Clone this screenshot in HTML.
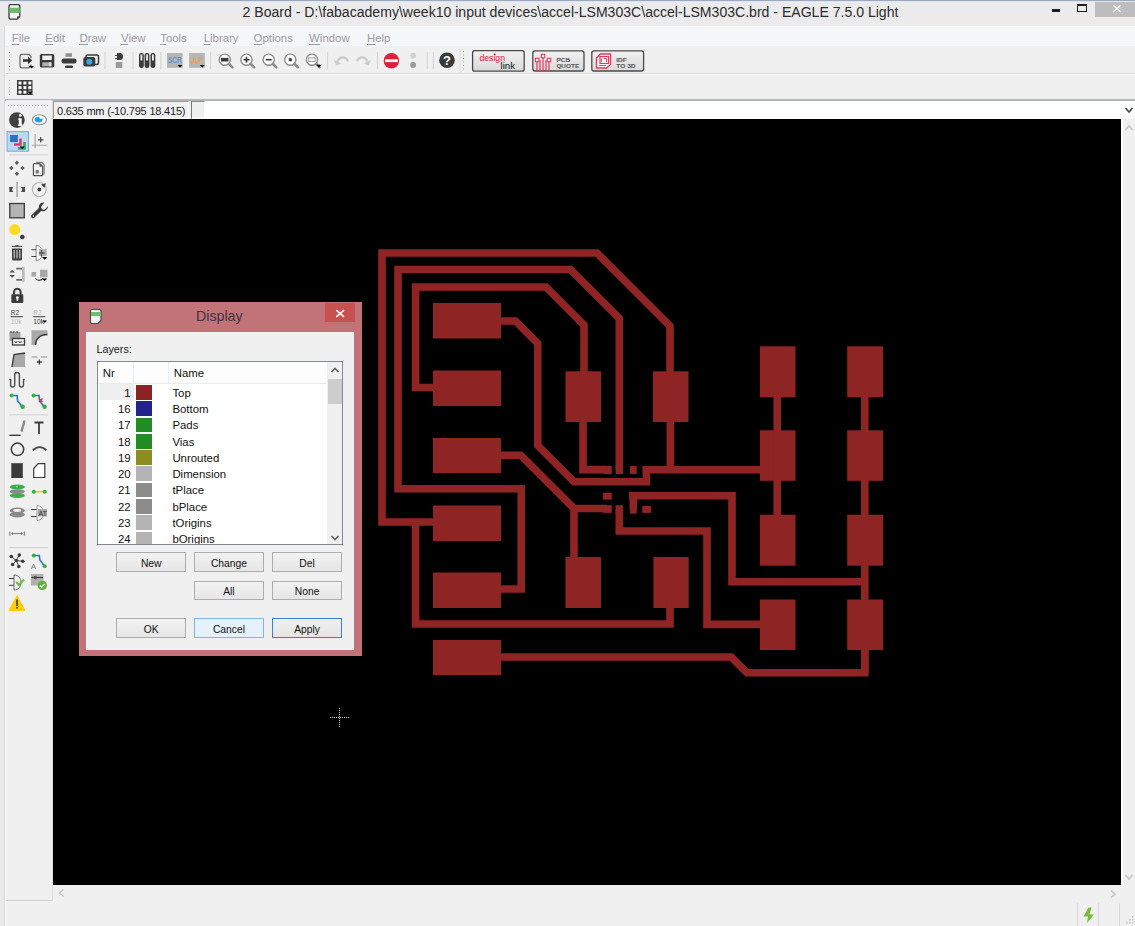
<!DOCTYPE html>
<html><head><meta charset="utf-8">
<style>
*{margin:0;padding:0;box-sizing:border-box}
html,body{width:1135px;height:926px;overflow:hidden;background:#f0f0f0;font-family:"Liberation Sans",sans-serif;position:relative}
.a{position:absolute}
#title{left:0;top:0;width:1135px;height:26px;background:#ebebeb;border-top:1px solid #9aa8c0;box-shadow:inset 0 1px 0 #dfe6ef}
#ttext{left:242.6px;top:4px;font-size:14.07px;color:#2b2b2b;white-space:nowrap}
#menubar{left:5px;top:26px;width:1130px;height:20.5px;background:#f5f6f8;border-top:1px solid #fdfdfd;border-bottom:1px solid #e6e7e9}
.mi{position:absolute;top:4.5px;font-size:11.4px;color:#9c9c9c;white-space:nowrap}
.mi u{text-decoration:none;border-bottom:1px solid #9a9a9a}
#tb1{left:6px;top:46px;width:1129px;height:28px;background:#f0f0f0;border-bottom:1px solid #d6d6d6}
#tb2{left:6px;top:74px;width:1129px;height:25px;background:#f0f0f0;border-top:1px solid #fafafa}
#cmdline{left:6px;top:99px;width:1129px;height:20px;background:#f0f0f0}
#canvas{left:53px;top:119px;width:1068px;height:766px;background:#000}
#lefttb{left:6px;top:100px;width:47px;height:801px;background:#f0f0f0;border-right:1px solid #dcdcdc;border-bottom:1.5px solid #d0d0d0}
#status{left:6px;top:901px;width:1129px;height:25px;background:#f0f0f0}
</style></head>
<body>

<div id="title" class="a"></div>
<svg class="a" style="left:8px;top:3px" width="14" height="18" viewBox="0 0 14 18"><path d="M2.6 1.6h7.6a1.6 1.6 0 0 1 1.6 1.6v10.2l-2.8 2.8h-6.4a1.6 1.6 0 0 1-1.6-1.6v-11.4a1.6 1.6 0 0 1 1.6-1.6z" fill="#fafafa" stroke="#3a3a3a" stroke-width="1.3"/><rect x="1.4" y="4.7" width="10.4" height="5.2" fill="#6cb86c"/><path d="M9 16.2v-2.8h2.8z" fill="#333"/></svg>
<div id="ttext" class="a">2 Board - D:\fabacademy\week10 input devices\accel-LSM303C\accel-LSM303C.brd - EAGLE 7.5.0 Light</div>
<div class="a" style="left:1052px;top:9px;width:8px;height:3px;background:#1e1e1e"></div>
<div class="a" style="left:1077px;top:4px;width:10px;height:8px;border:1px solid #1e1e1e;border-top-width:2px"></div>
<div class="a" style="left:1095px;top:2px;width:40px;height:15px;background:#bdbdbd"></div>
<svg class="a" style="left:1112px;top:4px" width="10" height="9" viewBox="0 0 10 9"><path d="M1 1L9 8M9 1L1 8" stroke="#fff" stroke-width="1.4"/></svg>
<div class="a" style="left:0;top:26px;width:4px;height:900px;background:#e9e9e9"></div>
<div class="a" style="left:4px;top:26px;width:1px;height:900px;background:#d9d9d9"></div>
<div class="a" style="left:5px;top:26px;width:1px;height:900px;background:#f7f7f7"></div>
<div id="menubar" class="a">
<span class="mi" style="left:6.8px"><u>F</u>ile</span>
<span class="mi" style="left:40.3px"><u>E</u>dit</span>
<span class="mi" style="left:74.4px"><u>D</u>raw</span>
<span class="mi" style="left:116px"><u>V</u>iew</span>
<span class="mi" style="left:155.2px"><u>T</u>ools</span>
<span class="mi" style="left:198.7px"><u>L</u>ibrary</span>
<span class="mi" style="left:248.6px"><u>O</u>ptions</span>
<span class="mi" style="left:304.1px"><u>W</u>indow</span>
<span class="mi" style="left:362px"><u>H</u>elp</span>
</div>

<div id="tb1" class="a"></div>
<div id="tb2" class="a"></div>
<!--TB-->
<svg class="a" style="left:0;top:46px" width="1135" height="54" viewBox="0 46 1135 54">
<rect x="9" y="52" width="1" height="1" fill="#a8a8a8"/><rect x="9" y="55.5" width="1" height="1" fill="#a8a8a8"/><rect x="9" y="59" width="1" height="1" fill="#a8a8a8"/><rect x="9" y="62.5" width="1" height="1" fill="#a8a8a8"/><rect x="9" y="66" width="1" height="1" fill="#a8a8a8"/><rect x="9" y="69.5" width="1" height="1" fill="#a8a8a8"/>
<rect x="9" y="80" width="1" height="1" fill="#a8a8a8"/><rect x="9" y="83.5" width="1" height="1" fill="#a8a8a8"/><rect x="9" y="87" width="1" height="1" fill="#a8a8a8"/><rect x="9" y="90.5" width="1" height="1" fill="#a8a8a8"/><rect x="9" y="94" width="1" height="1" fill="#a8a8a8"/>
<rect x="463" y="51" width="1" height="1" fill="#a8a8a8"/><rect x="463" y="54.5" width="1" height="1" fill="#a8a8a8"/><rect x="463" y="58" width="1" height="1" fill="#a8a8a8"/><rect x="463" y="61.5" width="1" height="1" fill="#a8a8a8"/><rect x="463" y="65" width="1" height="1" fill="#a8a8a8"/><rect x="463" y="68.5" width="1" height="1" fill="#a8a8a8"/>
<rect x="104.5" y="52" width="1" height="17" fill="#d2d2d2"/>
<rect x="132.5" y="52" width="1" height="17" fill="#d2d2d2"/>
<rect x="160.3" y="52" width="1" height="17" fill="#d2d2d2"/>
<rect x="210.1" y="52" width="1" height="17" fill="#d2d2d2"/>
<rect x="327.1" y="52" width="1" height="17" fill="#d2d2d2"/>
<rect x="376.9" y="52" width="1" height="17" fill="#d2d2d2"/>
<rect x="426.7" y="52" width="1" height="17" fill="#d2d2d2"/>
<rect x="432.8" y="52" width="1" height="17" fill="#d2d2d2"/>
<path d="M31 58.2V56.5L29 54.3H21.8Q20 54.3 20 56.1V66Q20 67.8 21.8 67.8H28.8L31 65.6V64.5" fill="none" stroke="#6e6e6e" stroke-width="1.3"/><path d="M23 59.2h5v-2.7l4.2 3.9l-4.2 3.9v-2.6h-5z" fill="#333"/><path d="M29 66h5l-2.5 2.5z" fill="#000"/>
<rect x="39.8" y="54" width="14.5" height="13.6" rx="1.8" fill="#3b3b3b"/><rect x="42.3" y="55.5" width="9.5" height="4.5" fill="#f0f0f0"/><rect x="42.3" y="62.3" width="9.5" height="4" fill="#b0b0b0"/><rect x="49" y="62.3" width="2" height="4" fill="#e0e0e0"/>
<rect x="65.5" y="53.3" width="6.5" height="3.5" fill="#8e8e8e"/><rect x="61.5" y="58.5" width="15" height="5" rx="2" fill="#3b3b3b"/><rect x="65" y="65.5" width="8" height="2.5" rx="1" fill="#3b3b3b"/>
<rect x="86" y="55" width="12.5" height="9.5" rx="2" fill="none" stroke="#3b3b3b" stroke-width="1.5"/><rect x="83.3" y="57" width="12" height="9.5" rx="2" fill="#3b3b3b"/><circle cx="89.3" cy="61.8" r="3" fill="#36a9e1"/>
<path d="M117 53h2.5a3.5 3.5 0 0 1 0 7h-2.5z" fill="#3b3b3b"/><rect x="115" y="55" width="2" height="1" fill="#3b3b3b"/><rect x="115" y="58" width="2" height="1" fill="#3b3b3b"/><rect x="115.8" y="62" width="6.5" height="6" fill="#9a9a9a"/>
<rect x="139" y="53" width="4.8" height="15" rx="2.2" fill="#3b3b3b"/><rect x="140.5" y="54.5" width="1.8" height="6" fill="#f4f4f4"/>
<rect x="144.6" y="53" width="4.8" height="15" rx="2.2" fill="#3b3b3b"/><rect x="146.1" y="54.5" width="1.8" height="6" fill="#f4f4f4"/>
<rect x="150.5" y="53" width="4.8" height="15" rx="2.2" fill="#3b3b3b"/><rect x="152" y="54.5" width="1.8" height="6" fill="#f4f4f4"/>
<rect x="167" y="53" width="15.6" height="14.8" fill="#b5b5b5"/><text x="168" y="63.2" font-family="Liberation Sans" font-size="9" fill="#3c8bd0" textLength="13.5" lengthAdjust="spacingAndGlyphs">SCR</text><path d="M177.5 65h5l-2.5 2.6z" fill="#000"/>
<rect x="189.2" y="53" width="15.6" height="14.8" fill="#b5b5b5"/><text x="190" y="63.2" font-family="Liberation Sans" font-size="9" fill="#f0a232" textLength="13" lengthAdjust="spacingAndGlyphs">ULP</text><path d="M199.8 65h5l-2.5 2.6z" fill="#000"/>
<circle cx="224.8" cy="59.7" r="5.6" fill="#fff" stroke="#8c8c8c" stroke-width="1.4"/><path d="M229.1 64l3.3 3.3" stroke="#8c8c8c" stroke-width="2.6" stroke-linecap="round"/>
<rect x="221" y="57.9" width="7.5" height="3.6" fill="#3b3b3b"/>
<circle cx="246.5" cy="59.7" r="5.6" fill="#fff" stroke="#8c8c8c" stroke-width="1.4"/><path d="M250.8 64l3.3 3.3" stroke="#8c8c8c" stroke-width="2.6" stroke-linecap="round"/>
<path d="M243.5 59.7h6M246.5 56.7v6" stroke="#3b3b3b" stroke-width="1.6"/>
<circle cx="268.7" cy="59.7" r="5.6" fill="#fff" stroke="#8c8c8c" stroke-width="1.4"/><path d="M273 64l3.3 3.3" stroke="#8c8c8c" stroke-width="2.6" stroke-linecap="round"/>
<path d="M265.7 59.7h6" stroke="#3b3b3b" stroke-width="1.6"/>
<circle cx="290.3" cy="59.7" r="5.6" fill="#fff" stroke="#8c8c8c" stroke-width="1.4"/><path d="M294.6 64l3.3 3.3" stroke="#8c8c8c" stroke-width="2.6" stroke-linecap="round"/>
<rect x="288.8" y="58.2" width="3" height="3" fill="#3b3b3b"/>
<circle cx="312" cy="59.7" r="5.6" fill="#fff" stroke="#8c8c8c" stroke-width="1.4"/><path d="M316.3 64l3.3 3.3" stroke="#8c8c8c" stroke-width="2.6" stroke-linecap="round"/>
<rect x="308.7" y="57.9" width="6.5" height="3.5" fill="none" stroke="#9a9a9a" stroke-width="1"/><path d="M316.5 64.8h5l-2.5 2.6z" fill="#000"/>
<path d="M348 61.3C345.5 56 340 56 337.3 61.5" fill="none" stroke="#cbcbcb" stroke-width="2.4"/><path d="M333.9 60.1L336.1 65.4L341.4 63.4z" fill="#cbcbcb"/>
<path d="M356.8 61.3C359.3 56 364.8 56 367.5 61.5" fill="none" stroke="#cbcbcb" stroke-width="2.4"/><path d="M370.9 60.1L368.7 65.4L363.4 63.4z" fill="#cbcbcb"/>
<circle cx="391.4" cy="60.7" r="7.7" fill="#e01e3c"/><rect x="385" y="59.3" width="12.8" height="2.8" fill="#fff"/>
<circle cx="413.1" cy="55.6" r="2.9" fill="#d0d0d0"/><circle cx="413.1" cy="64.9" r="2.9" fill="#9a9a9a"/>
<circle cx="447" cy="60.3" r="7.8" fill="#3a3a3a"/><text x="447" y="65.3" text-anchor="middle" font-family="Liberation Sans" font-weight="bold" font-size="13" fill="#fff">?</text>
<rect x="459.5" y="48" width="1" height="26" fill="#dedede"/>
<defs><linearGradient id="bg1" x1="0" y1="0" x2="0" y2="1"><stop offset="0" stop-color="#f2f2f2"/><stop offset="1" stop-color="#d9d9d9"/></linearGradient></defs>
<rect x="472.6" y="50.6" width="51.6" height="20.5" rx="2.2" fill="url(#bg1)" stroke="#4a4a4a" stroke-width="1.3"/>
<rect x="532.8" y="50.8" width="51.2" height="20.2" rx="2.2" fill="url(#bg1)" stroke="#4a4a4a" stroke-width="1.3"/>
<rect x="591.8" y="50.8" width="51.8" height="20.2" rx="2.2" fill="url(#bg1)" stroke="#4a4a4a" stroke-width="1.3"/>
<text x="479.5" y="61.3" font-family="Liberation Sans" font-size="9.5" fill="#e2143e" textLength="25.5" lengthAdjust="spacingAndGlyphs">design</text>
<circle cx="494.7" cy="54.5" r="1" fill="#e2143e"/>
<text x="500.5" y="69.3" font-family="Liberation Sans" font-size="8.5" fill="#111" textLength="14.5" lengthAdjust="spacingAndGlyphs">link</text>
<g stroke="#e8385a" stroke-width="1.2" fill="none"><path d="M537 62v9M540 60v11M543 57.5v13.5M546 60v11M549 62v9"/></g>
<g fill="#fff" stroke="#e8385a" stroke-width="1.1"><rect x="535.5" y="58.3" width="3.4" height="3.4"/><rect x="541.3" y="54.3" width="3.4" height="3.4"/><rect x="547.3" y="58.3" width="3.4" height="3.4"/></g>
<text x="556.4" y="61.8" font-family="Liberation Sans" font-weight="bold" font-size="6.2" fill="#555" textLength="13.8" lengthAdjust="spacingAndGlyphs">PCB</text>
<text x="556.4" y="68.1" font-family="Liberation Sans" font-weight="bold" font-size="6.2" fill="#555" textLength="22.8" lengthAdjust="spacingAndGlyphs">QUOTE</text>
<path d="M596.5 58l4-4h10v10.5l-4 3.5h-10z" fill="#fff" stroke="#e8385a" stroke-width="1.4" stroke-linejoin="round"/>
<rect x="600" y="56.5" width="8.5" height="7" fill="none" stroke="#e8385a" stroke-width="1.2"/>
<path d="M601.5 58.5v3.5M603.5 58.5h3v3.5M599 65.5h7" stroke="#e8385a" stroke-width="0.9" fill="none"/>
<text x="616.2" y="61.8" font-family="Liberation Sans" font-weight="bold" font-size="6.2" fill="#555" textLength="10.5" lengthAdjust="spacingAndGlyphs">IDF</text>
<text x="616.2" y="68.1" font-family="Liberation Sans" font-weight="bold" font-size="6.2" fill="#555" textLength="19.5" lengthAdjust="spacingAndGlyphs">TO 3D</text>
<rect x="17" y="80" width="15.5" height="15" fill="#3b3b3b"/>
<rect x="18.5" y="81.5" width="3" height="3" fill="#fafafa"/>
<rect x="18.5" y="86.1" width="3" height="3" fill="#fafafa"/>
<rect x="18.5" y="90.7" width="3" height="3" fill="#fafafa"/>
<rect x="23.4" y="81.5" width="3" height="3" fill="#fafafa"/>
<rect x="23.4" y="86.1" width="3" height="3" fill="#fafafa"/>
<rect x="23.4" y="90.7" width="3" height="3" fill="#fafafa"/>
<rect x="28.3" y="81.5" width="3" height="3" fill="#fafafa"/>
<rect x="28.3" y="86.1" width="3" height="3" fill="#fafafa"/>
<rect x="28.3" y="90.7" width="3" height="3" fill="#fafafa"/>
<path d="M27.5 91.5h5l-2.5 3z" fill="#000"/>
</svg>
<!--/TB-->
<div id="cmdline" class="a"></div>
<div class="a" style="left:5px;top:99px;width:1130px;height:1.5px;background:#b4b4bc"></div>
<div class="a" style="left:53px;top:101px;width:136px;height:17.5px;background:#f0f0f0;border-top:1px solid #9a9a9a;border-left:1px solid #9a9a9a;border-right:1px solid #fff;border-bottom:1px solid #fff"></div>
<div class="a" style="left:57px;top:105px;font-size:11px;letter-spacing:-0.2px;color:#1a1a1a;white-space:nowrap">0.635 mm (-10.795 18.415)</div>
<div class="a" style="left:190.5px;top:101px;width:14.5px;height:17.5px;background:#f0f0f0;border-top:1px solid #8a8a8a;border-left:1.5px solid #7a7a7a;border-right:1px solid #fff;border-bottom:1px solid #fff"></div>
<div class="a" style="left:205.4px;top:101px;width:930px;height:18px;background:#fff"></div>
<svg class="a" style="left:1124px;top:106px" width="10" height="9" viewBox="0 0 10 9"><path d="M1.5 2l3.5 4l3.5-4" fill="none" stroke="#4a4a4a" stroke-width="1.8"/></svg>
<div id="lefttb" class="a"></div>
<!--LTB-->
<svg class="a" style="left:0;top:100px" width="53" height="801" viewBox="0 100 53 801">
<rect x="8" y="105" width="1" height="1" fill="#a8a8a8"/>
<rect x="11" y="105" width="1" height="1" fill="#a8a8a8"/>
<rect x="14" y="105" width="1" height="1" fill="#a8a8a8"/>
<rect x="17" y="105" width="1" height="1" fill="#a8a8a8"/>
<rect x="20" y="105" width="1" height="1" fill="#a8a8a8"/>
<rect x="23" y="105" width="1" height="1" fill="#a8a8a8"/>
<rect x="26" y="105" width="1" height="1" fill="#a8a8a8"/>
<rect x="29" y="105" width="1" height="1" fill="#a8a8a8"/>
<rect x="32" y="105" width="1" height="1" fill="#a8a8a8"/>
<rect x="35" y="105" width="1" height="1" fill="#a8a8a8"/>
<rect x="38" y="105" width="1" height="1" fill="#a8a8a8"/>
<rect x="41" y="105" width="1" height="1" fill="#a8a8a8"/>
<rect x="44" y="105" width="1" height="1" fill="#a8a8a8"/>
<rect x="47" y="105" width="1" height="1" fill="#a8a8a8"/>
<circle cx="16.9" cy="120.1" r="7.8" fill="#404040"/><circle cx="20.3" cy="115.4" r="1.3" fill="#fff"/><path d="M18.3 118.3h3.4v6.2h0.8v1.6h-4.6v-1.6h0.9v-4.6h-0.5z" fill="#fff"/>
<ellipse cx="39.4" cy="119.8" rx="7" ry="5" fill="#fff" stroke="#8c8c8c" stroke-width="1.1"/><ellipse cx="38.6" cy="119.6" rx="4" ry="2.9" fill="#1ea0e6"/><circle cx="40.8" cy="117.6" r="1.4" fill="#fff"/>
<rect x="7" y="131.6" width="21.5" height="19.6" fill="#bcd9f4" stroke="#6fa9e6" stroke-width="1"/>
<rect x="10.1" y="135" width="7.8" height="7" fill="#2d72bf"/><path d="M20.5 138.4v6h-6.5" fill="none" stroke="#e3336a" stroke-width="2.5"/><path d="M24.5 142v6.4h-6.6" fill="none" stroke="#3aae5a" stroke-width="2.8"/><path d="M19.7 146.4h5l-2.5 2.8z" fill="#000"/>
<path d="M35.1 134v14.5M32 145.2h14.6" stroke="#a4a4a4" stroke-width="1.1"/><path d="M40.7 137v5.6M37.9 139.8h5.6" stroke="#505050" stroke-width="1.3"/><circle cx="40.7" cy="139.8" r="1" fill="#505050"/>
<rect x="9" y="154.4" width="39" height="1" fill="#d0d0d0"/>
<rect x="9" y="414.3" width="39" height="1" fill="#d0d0d0"/>
<rect x="9" y="547" width="39" height="1" fill="#d0d0d0"/>
<g fill="#5a5a5a"><path d="M16.9 160.6l2.1 2.2l-2.1 2.2l-2.1-2.2z M16.9 171.5l2.1 2.2l-2.1 2.2l-2.1-2.2z M11.3 165.9l2.2 2.2l-2.2 2.2l-2.2-2.2z M22.5 165.9l2.2 2.2l-2.2 2.2l-2.2-2.2z"/></g>
<path d="M36 162.2h5.8l2.3 2.4v10" fill="none" stroke="#6a6a6a" stroke-width="1.1"/><path d="M34.2 163.6h5.6l2.8 2.8v8.5a0.8 0.8 0 0 1-0.8 0.8h-7.6a0.8 0.8 0 0 1-0.8-0.8v-10.5a0.8 0.8 0 0 1 0.8-0.8z" fill="#f4f4f4" stroke="#555" stroke-width="1.2"/><path d="M39.5 163.6l3.1 3.1h-3.1z" fill="#555"/><rect x="35.6" y="170" width="3.2" height="3.5" fill="#7a7a7a"/>
<rect x="16.4" y="182" width="1.3" height="15" fill="#9a9a9a"/><path d="M9.3 187h4l-1.3 2.5l1.3 2.5h-4z M25 187h-4l1.3 2.5l-1.3 2.5h4z" fill="#4a4a4a"/>
<circle cx="39.3" cy="189.5" r="7" fill="none" stroke="#b4b4b4" stroke-width="1.2"/><circle cx="39.3" cy="189.5" r="1.9" fill="#3b3b3b"/><path d="M45.8 183.2l-4.6 1.3l3.3 3.3z" fill="#3b3b3b"/>
<rect x="9.8" y="203.5" width="14.5" height="14.3" fill="#b4b4b4" stroke="#3b3b3b" stroke-width="1.3"/>
<path d="M33.8 218.2a2 2 0 0 1-2.6-2.6l7.6-7.6a4.6 4.6 0 0 1 5.6-5.4l-2.6 2.8a2.4 2.4 0 0 0 3.8 3.3l2.4-2.6a4.6 4.6 0 0 1-6.6 4.6z" fill="#3b3b3b"/><circle cx="33.4" cy="216.1" r="0.8" fill="#f0f0f0"/>
<circle cx="14.7" cy="229.6" r="5.5" fill="#ffda22"/><circle cx="22.3" cy="237" r="2.3" fill="#3b3b3b"/>
<rect x="12" y="245.8" width="10" height="1.3" fill="#555"/><rect x="15.5" y="245" width="3" height="1" fill="#555"/><path d="M12 248.5h10v10.5a1.5 1.5 0 0 1-1.5 1.5h-7a1.5 1.5 0 0 1-1.5-1.5z" fill="#404040"/><rect x="13.6" y="250" width="1.2" height="8.3" fill="#c4c4c4"/><rect x="16.4" y="250" width="1.2" height="8.3" fill="#c4c4c4"/><rect x="19.2" y="250" width="1.2" height="8.3" fill="#c4c4c4"/>
<path d="M36.1 245.3c3.5 0.3 6.5 3.5 6.8 7.7c-0.3 4.2-3.3 7.4-6.8 7.7z" fill="#f8f8f8" stroke="#7a7a7a" stroke-width="0.9"/><rect x="39" y="249" width="7.8" height="7" fill="#b4b4b4"/><path d="M31.5 249.7h4.6M31.5 256.5h4.6" stroke="#444" stroke-width="1"/><path d="M41.5 250v6.5M38.8 253h6" stroke="#555" stroke-width="1.3"/><path d="M42 257h5.2l-2.6 2.8z" fill="#000"/>
<path d="M9.3 272.6l2.8-2.7l2.8 2.7z M9.3 275l2.8 2.7l2.8-2.7z" fill="#505050"/><path d="M16.2 268.7h6.3M16.2 279.8h6.3" stroke="#6a6a6a" stroke-width="1.8"/><rect x="22" y="266.7" width="2.7" height="15" fill="#bcbcbc"/>
<rect x="31.5" y="272" width="4.5" height="4.5" fill="#a8a8a8"/><rect x="40" y="269.7" width="7.5" height="7.5" fill="#a8a8a8"/><path d="M35.5 278.5c2 2.5 5 2.5 7.5 0" stroke="#3b3b3b" fill="none" stroke-width="1.1"/><path d="M42 278.5h5.2l-2.6 2.8z" fill="#000"/>
<path d="M14 294.5v-2.5a3.3 3.3 0 0 1 6.6 0v2.5" fill="none" stroke="#3b3b3b" stroke-width="2"/><rect x="11.3" y="294.3" width="12" height="8.7" rx="1.2" fill="#3b3b3b"/><rect x="16.6" y="297" width="1.6" height="4" fill="#fff"/><circle cx="17.4" cy="297.5" r="1.3" fill="#fff"/>
<text x="10.8" y="314.5" font-family="Liberation Sans" font-size="6.5" fill="#3b3b3b">R2</text><rect x="10.7" y="316.2" width="12" height="1" fill="#3b3b3b"/><text x="10.8" y="324" font-family="Liberation Sans" font-size="6.8" fill="#b8b8b8">10k</text>
<text x="33.3" y="314.5" font-family="Liberation Sans" font-size="6.5" fill="#b8b8b8">R2</text><rect x="33.3" y="316.2" width="12" height="1" fill="#3b3b3b"/><text x="33.3" y="324" font-family="Liberation Sans" font-size="6.8" fill="#3b3b3b">10k</text><path d="M42.5 320.5h4.5l-2.25 2.6z" fill="#000"/>
<rect x="9.5" y="332" width="11" height="9" fill="#a0a0a0"/><path d="M11 331v2M14 331v2M17 331v2" stroke="#3b3b3b" stroke-width="1"/><rect x="12.5" y="338.5" width="12" height="6.5" fill="#f0f0f0" stroke="#3b3b3b" stroke-width="1.3"/><path d="M15 341v1.5h2v-1.5M19 341v1.5h2v-1.5" stroke="#3b3b3b" stroke-width="0.8" fill="none"/>
<path d="M31.5 330.3h16v4c-7 0-11 4-11 10.8h-5z" fill="#a8a8a8"/><path d="M35.5 345c0-6 4.5-10.5 12-10.5" fill="none" stroke="#3b3b3b" stroke-width="1.5"/>
<path d="M14 354.5l11-1.5v14h-13z" fill="#a8a8a8"/><path d="M12 367l2-12.5l11-1.5" fill="none" stroke="#3b3b3b" stroke-width="1.4"/>
<path d="M31.5 357h6M41 357h6" stroke="#8a8a8a" stroke-width="1"/><path d="M39.3 359.5v5M36.8 362h5" stroke="#3b3b3b" stroke-width="1.4"/>
<path d="M9.3 379.5H10.6V385A2.05 2.05 0 0 0 14.7 385V374.8A2.35 2.35 0 0 1 19.4 374.8V385A2.05 2.05 0 0 0 23.5 385V379.5H24.7" fill="none" stroke="#4e4e4e" stroke-width="1.4"/>
<path d="M11.6 395.5h5.5l0.5 5.5l5 6" fill="none" stroke="#2a78c8" stroke-width="1.6"/><circle cx="11.6" cy="395.6" r="2" fill="#3aae48"/><circle cx="22.6" cy="406.8" r="2.3" fill="#3aae48"/>
<path d="M33.6 395.5h5.5l0.5 5.5l5 6" fill="none" stroke="#2a78c8" stroke-width="1.6"/><circle cx="33.6" cy="395.6" r="2" fill="#3aae48"/><circle cx="44.6" cy="406.8" r="2.3" fill="#3aae48"/><path d="M39 398.5l3.5 3.5M42.5 398.5l-3.5 3.5" stroke="#e0304a" stroke-width="1.3"/>
<rect x="9.5" y="434.6" width="11" height="1.4" fill="#3b3b3b"/><path d="M24.3 421.5L21.8 430.5" stroke="#8c8c8c" stroke-width="2.4" stroke-linecap="round"/><path d="M20.6 430l1.6 2.2l0.8-1.9z" fill="#8c8c8c"/>
<path d="M34.5 422.5h9M39 422.5v11.5" stroke="#3b3b3b" stroke-width="1.8"/>
<circle cx="17.5" cy="449.3" r="6.2" fill="none" stroke="#3b3b3b" stroke-width="1.5"/>
<path d="M32.8 450.3c4-4.3 9.6-4.3 13.6 0" fill="none" stroke="#484848" stroke-width="1.9"/>
<rect x="11.3" y="463.2" width="11.5" height="14.8" fill="#3b3b3b"/>
<path d="M33.7 468.5l4.5-4.8h6.6v13.8h-11.1z" fill="#fff" stroke="#3b3b3b" stroke-width="1.2"/>
<ellipse cx="17.3" cy="495.5" rx="7.5" ry="2.6" fill="#3aae48"/><ellipse cx="17.3" cy="491.5" rx="7.5" ry="2.3" fill="#8a8a8a"/><ellipse cx="17.3" cy="487" rx="7.5" ry="2.6" fill="#3aae48"/><circle cx="17" cy="486.5" r="0.8" fill="#c0e8c0"/>
<path d="M33.8 491.7h11" stroke="#f5c518" stroke-width="1.6"/><circle cx="33.8" cy="491.7" r="2" fill="#3aae48"/><circle cx="44.8" cy="491.7" r="2" fill="#3aae48"/>
<ellipse cx="17.3" cy="514.5" rx="7.5" ry="3" fill="#8a8a8a"/><ellipse cx="17.3" cy="510.5" rx="7.5" ry="3" fill="#8a8a8a"/><ellipse cx="17.3" cy="510.5" rx="4" ry="1.4" fill="#f5f5f5"/>
<path d="M37 505.5c4 0 6.5 3.5 6.5 7.5s-2.5 7.5-6.5 7.5z" fill="#fff" stroke="#8a8a8a" stroke-width="0.9"/><path d="M31.5 509.5h5M31.5 516.5h5" stroke="#3b3b3b" stroke-width="1.1"/><rect x="38" y="509" width="9" height="7.5" fill="#a8a8a8"/><text x="38.5" y="515.8" font-family="Liberation Sans" font-size="7" fill="#333">AT</text>
<path d="M9.8 531.5v4.3M24.3 531.5v4.3M12 533.6h10" stroke="#6a6a6a" stroke-width="0.9"/><path d="M11 533.6l2-1.3v2.6z M23 533.6l-2-1.3v2.6z" fill="#6a6a6a"/>
<g stroke="#3b3b3b" stroke-width="0.9"><path d="M16.3 560.5L11.3 556.5M16.3 560.5L19.3 555M16.3 560.5L22.8 561.3M16.3 560.5L12.6 564.5M16.3 560.5L18.8 566.5"/></g><g fill="#3b3b3b"><circle cx="16.3" cy="560.5" r="1.8"/><circle cx="11.3" cy="556.5" r="1.8"/><circle cx="19.3" cy="555" r="1.8"/><circle cx="22.8" cy="561.3" r="1.8"/><circle cx="12.6" cy="564.5" r="1.8"/><circle cx="18.8" cy="566.5" r="1.8"/></g>
<path d="M33.8 555.5h5.5l0.6 4.5l4.8 6.2" fill="none" stroke="#2a78c8" stroke-width="1.6"/><circle cx="33.8" cy="555.5" r="2" fill="#3aae48"/><circle cx="44.8" cy="566.2" r="2" fill="#3aae48"/><text x="30.8" y="568.5" font-family="Liberation Sans" font-size="8" fill="#777">A</text>
<path d="M14 575c4.5 0 7 3.5 7 7.5s-2.5 7.5-7 7.5" fill="none" stroke="#555" stroke-width="0.9"/><path d="M14 575v15" stroke="#555" stroke-width="0.9"/><path d="M9.3 578.5h4.5M9.3 585.3h4.5" stroke="#3b3b3b" stroke-width="1"/><path d="M16 582l3 3l5-5.5" fill="none" stroke="#6bbf3a" stroke-width="1.9"/>
<rect x="31" y="574" width="12.5" height="11.5" fill="#b0b0b0"/><path d="M31.5 577.5h11.5" stroke="#3b3b3b" stroke-width="1.2"/><circle cx="35.3" cy="577.5" r="1.3" fill="none" stroke="#3b3b3b" stroke-width="0.8"/><circle cx="42.3" cy="585.5" r="4.7" fill="#5fb53a"/><path d="M40 585.5l1.6 1.6l3-3" stroke="#fff" stroke-width="1.3" fill="none"/>
<path d="M17 595.5l8 15h-16z" fill="#ffcc00" stroke="#ffcc00" stroke-width="0.8" stroke-linejoin="round"/><rect x="16.3" y="599.5" width="1.5" height="6.5" fill="#333"/><rect x="16.3" y="607" width="1.5" height="1.5" fill="#333"/>
</svg>
<!--/LTB-->
<div id="canvas" class="a"></div>
<!--PCB-->
<svg class="a" style="left:0;top:0" width="1135" height="926" viewBox="0 0 1135 926">
<defs><clipPath id="cv"><rect x="53" y="119" width="1068" height="766"/></clipPath></defs>
<g clip-path="url(#cv)" fill="#8f2424">
<rect x="433" y="303" width="68" height="35.5"/>
<rect x="433" y="370.5" width="68" height="35.5"/>
<rect x="433" y="438" width="68" height="35"/>
<rect x="433" y="505.5" width="68" height="35.5"/>
<rect x="433" y="572.5" width="68" height="35.5"/>
<rect x="433" y="640" width="68" height="35"/>
<rect x="565.5" y="371.3" width="35.5" height="50.7"/>
<rect x="653" y="371.3" width="35.5" height="50.7"/>
<rect x="565.5" y="557" width="35.5" height="51"/>
<rect x="653.4" y="557" width="35.3" height="51"/>
<rect x="760" y="346.3" width="35.5" height="50.9"/>
<rect x="847.2" y="346.3" width="35.8" height="50.9"/>
<rect x="760" y="430.3" width="35.5" height="50.5"/>
<rect x="847.2" y="430.3" width="35.8" height="50.5"/>
<rect x="760" y="514.7" width="35.5" height="51"/>
<rect x="847.2" y="514.7" width="35.8" height="51"/>
<rect x="760" y="599.5" width="35.5" height="50.5"/>
<rect x="847.2" y="599.5" width="35.8" height="50.5"/>
<rect x="603" y="466" width="8.8" height="8"/>
<rect x="615.6" y="466" width="7.4" height="8"/>
<rect x="630" y="466" width="6.7" height="8"/>
<rect x="642.7" y="466" width="7.6" height="7.6"/>
<rect x="603" y="492.9" width="8.8" height="6.7"/>
<rect x="629" y="492" width="7.7" height="7.6"/>
<rect x="603" y="505.2" width="8.8" height="7.7"/>
<rect x="615.6" y="505.2" width="7.4" height="7.8"/>
<rect x="630" y="506" width="6.7" height="7.6"/>
<rect x="642.3" y="506" width="8.7" height="6.9"/>
</g><g clip-path="url(#cv)" fill="none" stroke="#8f2424" stroke-width="7.6" stroke-linejoin="miter" stroke-linecap="butt">
<polyline points="670,380 670,326 597,253 382,253 382,522 440,522"/>
<polyline points="415.6,522 415.6,624 670,624 670,600"/>
<polyline points="619.3,470 619.3,318.3 570.5,269.5 398,269.5 398,488.7 521.2,488.7 521.2,589 495,589"/>
<polyline points="440,387.5 415.6,387.5 415.6,287 546,287 584,325 584,380"/>
<polyline points="495,321 515.5,321 537.7,343.2 537.7,445.4 574,481.8 646.4,481.8 646.4,469.8 777,469.8"/>
<polyline points="583,415 583,469.6 607.4,469.6"/>
<polyline points="670.4,415 670.4,469.8"/>
<polyline points="495,455.3 520.8,455.3 574,508.5 607.4,508.5"/>
<polyline points="574,508.5 574,565"/>
<polyline points="633.3,509.5 633.3,495.7 732,495.7 732,581.7 864.6,581.7"/>
<polyline points="619.3,509 619.3,531 707,531 707,624.4 770,624.4"/>
<polyline points="495,657 731.3,657 747,672.8 864.8,672.8 864.8,640"/>
<polyline points="777.2,390 777.2,520"/>
<polyline points="864.8,390 864.8,672.8"/>
</g>
<g stroke="#c8c8c8" stroke-width="1" stroke-dasharray="1,1"><line x1="330" y1="717.5" x2="350" y2="717.5"/><line x1="339.5" y1="708" x2="339.5" y2="727"/></g>
</svg>
<!--/PCB-->
<!--DLG-->
<div class="a" style="left:78.6px;top:302.3px;width:283px;height:354.1px;background:#c27377"></div>
<svg class="a" style="left:89px;top:308px" width="14" height="17" viewBox="0 0 14 17"><path d="M3 1.5h7.5a1.5 1.5 0 0 1 1.5 1.5v9.5l-3 3h-6a1.5 1.5 0 0 1-1.5-1.5v-11a1.5 1.5 0 0 1 1.5-1.5z" fill="#f4f4f4" stroke="#4a4a4a" stroke-width="1.2"/><rect x="2" y="4" width="9.8" height="4" fill="#6fbf6f"/></svg>
<div class="a" style="left:196px;top:308.3px;font-size:14.2px;color:#3d3447;white-space:nowrap">Display</div>
<div class="a" style="left:325px;top:303.2px;width:29.7px;height:19.1px;background:#c75050"></div>
<svg class="a" style="left:335px;top:309px" width="10" height="9" viewBox="0 0 10 9"><path d="M1.3 1.1L9 7.9M9 1.1L1.3 7.9" stroke="#fff" stroke-width="1.5"/></svg>
<div class="a" style="left:86px;top:332px;width:268.2px;height:317.7px;background:#f0f0f0"></div>
<div class="a" style="left:96.4px;top:342.5px;font-size:10.8px;color:#1a1a1a;white-space:nowrap">Layers:</div>
<div class="a" style="left:97.2px;top:361.2px;width:245.5px;height:184.3px;background:#fff;border:1px solid #828790;overflow:hidden">
<div class="a" style="left:0;top:0;width:229px;height:21.5px;background:#fdfdfd;border-bottom:1px solid #e3ecf6"></div>
<div class="a" style="left:34.5px;top:0;width:1px;height:21.5px;background:#e8eef6"></div>
<div class="a" style="left:70.3px;top:0;width:1px;height:21.5px;background:#e8eef6"></div>
<div class="a" style="left:4.5px;top:5px;font-size:11.4px;color:#111;white-space:nowrap">Nr</div>
<div class="a" style="left:75.5px;top:5px;font-size:11.4px;color:#111;white-space:nowrap">Name</div>
<div class="a" style="left:0.5px;top:22.2px;width:35px;height:16px;background:#efefef"></div>
<div class="a" style="left:0;top:24.50px;width:32.5px;text-align:right;font-size:11.4px;color:#111;white-space:nowrap">1</div>
<div class="a" style="left:38.2px;top:22.80px;width:15.4px;height:14.8px;background:#8c2323"></div>
<div class="a" style="left:74.2px;top:24.50px;font-size:11.4px;color:#111;white-space:nowrap">Top</div>
<div class="a" style="left:0;top:40.78px;width:32.5px;text-align:right;font-size:11.4px;color:#111;white-space:nowrap">16</div>
<div class="a" style="left:38.2px;top:39.08px;width:15.4px;height:14.8px;background:#23238c"></div>
<div class="a" style="left:74.2px;top:40.78px;font-size:11.4px;color:#111;white-space:nowrap">Bottom</div>
<div class="a" style="left:0;top:57.06px;width:32.5px;text-align:right;font-size:11.4px;color:#111;white-space:nowrap">17</div>
<div class="a" style="left:38.2px;top:55.36px;width:15.4px;height:14.8px;background:#238c23"></div>
<div class="a" style="left:74.2px;top:57.06px;font-size:11.4px;color:#111;white-space:nowrap">Pads</div>
<div class="a" style="left:0;top:73.34px;width:32.5px;text-align:right;font-size:11.4px;color:#111;white-space:nowrap">18</div>
<div class="a" style="left:38.2px;top:71.64px;width:15.4px;height:14.8px;background:#238c23"></div>
<div class="a" style="left:74.2px;top:73.34px;font-size:11.4px;color:#111;white-space:nowrap">Vias</div>
<div class="a" style="left:0;top:89.62px;width:32.5px;text-align:right;font-size:11.4px;color:#111;white-space:nowrap">19</div>
<div class="a" style="left:38.2px;top:87.92px;width:15.4px;height:14.8px;background:#8c8c23"></div>
<div class="a" style="left:74.2px;top:89.62px;font-size:11.4px;color:#111;white-space:nowrap">Unrouted</div>
<div class="a" style="left:0;top:105.90px;width:32.5px;text-align:right;font-size:11.4px;color:#111;white-space:nowrap">20</div>
<div class="a" style="left:38.2px;top:104.20px;width:15.4px;height:14.8px;background:#b4b4b4"></div>
<div class="a" style="left:74.2px;top:105.90px;font-size:11.4px;color:#111;white-space:nowrap">Dimension</div>
<div class="a" style="left:0;top:122.18px;width:32.5px;text-align:right;font-size:11.4px;color:#111;white-space:nowrap">21</div>
<div class="a" style="left:38.2px;top:120.48px;width:15.4px;height:14.8px;background:#8c8c8c"></div>
<div class="a" style="left:74.2px;top:122.18px;font-size:11.4px;color:#111;white-space:nowrap">tPlace</div>
<div class="a" style="left:0;top:138.46px;width:32.5px;text-align:right;font-size:11.4px;color:#111;white-space:nowrap">22</div>
<div class="a" style="left:38.2px;top:136.76px;width:15.4px;height:14.8px;background:#8c8c8c"></div>
<div class="a" style="left:74.2px;top:138.46px;font-size:11.4px;color:#111;white-space:nowrap">bPlace</div>
<div class="a" style="left:0;top:154.74px;width:32.5px;text-align:right;font-size:11.4px;color:#111;white-space:nowrap">23</div>
<div class="a" style="left:38.2px;top:153.04px;width:15.4px;height:14.8px;background:#b4b4b4"></div>
<div class="a" style="left:74.2px;top:154.74px;font-size:11.4px;color:#111;white-space:nowrap">tOrigins</div>
<div class="a" style="left:0;top:171.02px;width:32.5px;text-align:right;font-size:11.4px;color:#111;white-space:nowrap">24</div>
<div class="a" style="left:38.2px;top:169.32px;width:15.4px;height:14.8px;background:#b4b4b4"></div>
<div class="a" style="left:74.2px;top:171.02px;font-size:11.4px;color:#111;white-space:nowrap">bOrigins</div>
<div class="a" style="left:229.3px;top:0;width:15.5px;height:183px;background:#f0f0f0"></div>
<div class="a" style="left:230.3px;top:17px;width:13.5px;height:25px;background:#cdcdcd"></div>
<svg class="a" style="left:232px;top:4px" width="10" height="8" viewBox="0 0 10 8"><path d="M1.5 6l3.5-3.5l3.5 3.5" fill="none" stroke="#606060" stroke-width="1.6"/></svg>
<svg class="a" style="left:232px;top:172px" width="10" height="8" viewBox="0 0 10 8"><path d="M1.5 2l3.5 3.5l3.5-3.5" fill="none" stroke="#606060" stroke-width="1.6"/></svg>
</div>
<div class="a" style="left:116.3px;top:552.4px;width:69.8px;height:19.7px;background:linear-gradient(#f2f2f2,#e6e6e6);border:1px solid #adadad;font-size:10.3px;color:#111;text-align:center;padding-top:1.5px;line-height:17.7px;white-space:nowrap">New</div>
<div class="a" style="left:194.2px;top:552.4px;width:69.5px;height:19.7px;background:linear-gradient(#f2f2f2,#e6e6e6);border:1px solid #adadad;font-size:10.3px;color:#111;text-align:center;padding-top:1.5px;line-height:17.7px;white-space:nowrap">Change</div>
<div class="a" style="left:272.2px;top:552.4px;width:69.8px;height:19.7px;background:linear-gradient(#f2f2f2,#e6e6e6);border:1px solid #adadad;font-size:10.3px;color:#111;text-align:center;padding-top:1.5px;line-height:17.7px;white-space:nowrap">Del</div>
<div class="a" style="left:194.2px;top:580.5px;width:69.5px;height:19.5px;background:linear-gradient(#f2f2f2,#e6e6e6);border:1px solid #adadad;font-size:10.3px;color:#111;text-align:center;padding-top:1.5px;line-height:17.5px;white-space:nowrap">All</div>
<div class="a" style="left:272.2px;top:580.5px;width:69.8px;height:19.5px;background:linear-gradient(#f2f2f2,#e6e6e6);border:1px solid #adadad;font-size:10.3px;color:#111;text-align:center;padding-top:1.5px;line-height:17.5px;white-space:nowrap">None</div>
<div class="a" style="left:116.3px;top:618px;width:69.8px;height:19.6px;background:linear-gradient(#f2f2f2,#e6e6e6);border:1px solid #adadad;font-size:10.3px;color:#111;text-align:center;padding-top:1.5px;line-height:17.6px;white-space:nowrap">OK</div>
<div class="a" style="left:194.2px;top:618px;width:69.5px;height:19.6px;background:#e5f1fb;border:1px solid #7eb4ea;font-size:10.3px;color:#111;text-align:center;padding-top:1.5px;line-height:17.6px;white-space:nowrap">Cancel</div>
<div class="a" style="left:272.2px;top:618px;width:69.8px;height:19.6px;background:linear-gradient(#f0f0f0,#e5e5e5);border:1px solid #3c7fd1;font-size:10.3px;color:#111;text-align:center;padding-top:1.5px;line-height:17.6px;white-space:nowrap">Apply</div>
<!--/DLG-->
<div id="status" class="a"></div>
<div class="a" style="left:1121px;top:119px;width:1.5px;height:766px;background:#fff"></div>
<svg class="a" style="left:1124px;top:123px" width="10" height="9" viewBox="0 0 10 9"><path d="M1.5 7l3.5-4l3.5 4" fill="none" stroke="#c4c4c4" stroke-width="1.6"/></svg>
<svg class="a" style="left:1124px;top:873px" width="10" height="9" viewBox="0 0 10 9"><path d="M1.5 2l3.5 4l3.5-4" fill="none" stroke="#c4c4c4" stroke-width="1.6"/></svg>
<svg class="a" style="left:57px;top:888px" width="9" height="10" viewBox="0 0 9 10"><path d="M6.5 1.5l-4 3.5l4 3.5" fill="none" stroke="#c4c4c4" stroke-width="1.6"/></svg>
<svg class="a" style="left:1109px;top:889px" width="9" height="10" viewBox="0 0 9 10"><path d="M2 1.5l4 3.5l-4 3.5" fill="none" stroke="#c4c4c4" stroke-width="1.6"/></svg>
<div class="a" style="left:1076.5px;top:903px;width:1px;height:23px;background:#dadada"></div>
<div class="a" style="left:1097.5px;top:903px;width:1px;height:23px;background:#dadada"></div>
<div class="a" style="left:1119px;top:903px;width:1px;height:23px;background:#dadada"></div>
<svg class="a" style="left:1082px;top:906px" width="14" height="18" viewBox="0 0 14 18"><path d="M6.5 1.5L1.5 10.5h4.5l-1 6.5l7-8.5h-4.5l2-7z" fill="#78bb3c"/></svg>
<svg class="a" style="left:1124px;top:915px" width="11" height="11" viewBox="0 0 11 11"><g fill="#bdbdbd"><rect x="8" y="1" width="1.5" height="1.5"/><rect x="5" y="4" width="1.5" height="1.5"/><rect x="8" y="4" width="1.5" height="1.5"/><rect x="2" y="7" width="1.5" height="1.5"/><rect x="5" y="7" width="1.5" height="1.5"/><rect x="8" y="7" width="1.5" height="1.5"/></g></svg>
</body></html>
